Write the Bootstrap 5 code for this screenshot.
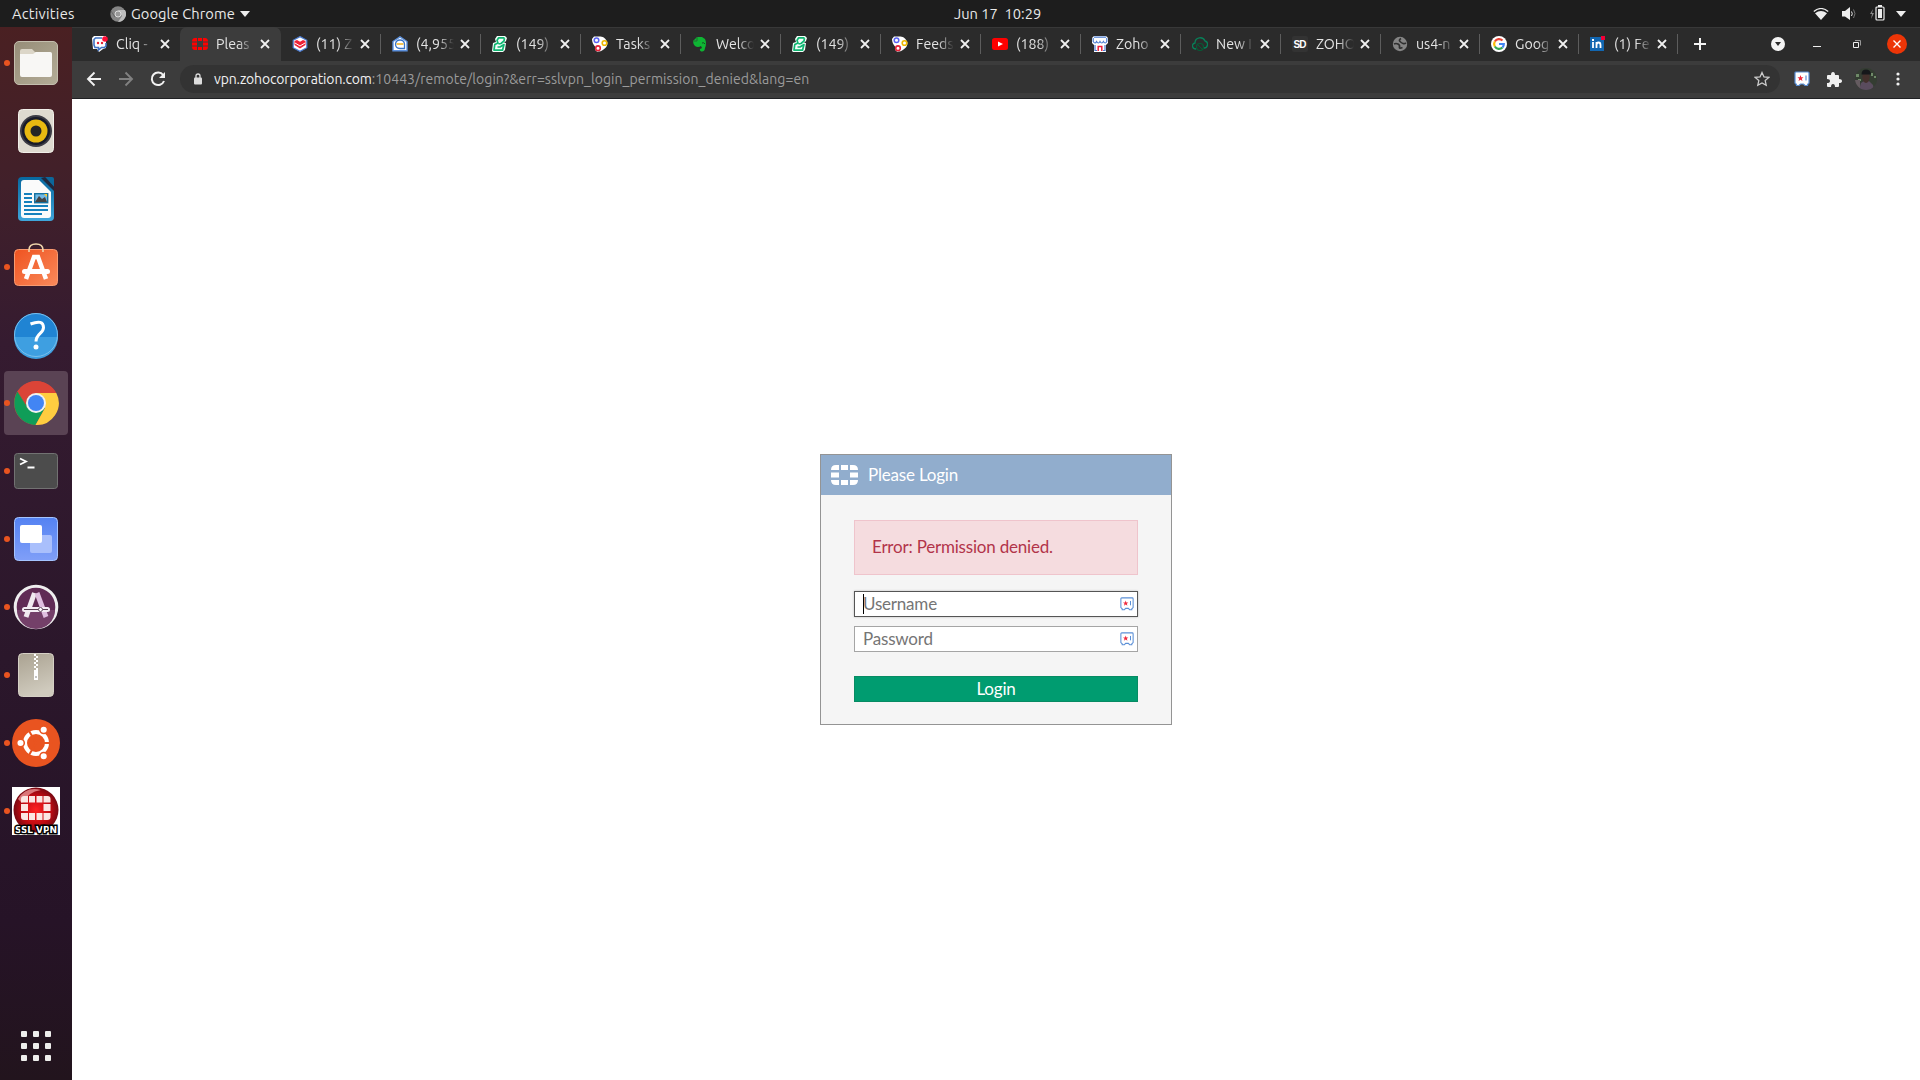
<!DOCTYPE html>
<html lang="en">
<head>
<meta charset="utf-8">
<title>Please Login</title>
<link rel="stylesheet" href="https://cdn.jsdelivr.net/npm/bootstrap@5.3.0/dist/css/bootstrap.min.css">
<script src="https://cdn.jsdelivr.net/npm/bootstrap@5.3.0/dist/js/bootstrap.bundle.min.js"></script>
<style>
body{width:1920px;height:1080px;overflow:hidden;font-family:Ubuntu,"Noto Sans",sans-serif;font-size:14px;background:#fff}
svg{display:block;flex:none}
.sysbar{height:27px;background:#1d1d1d;color:#e9e9e9;line-height:27px;font-size:14.67px}
.sys-left{width:954px;padding-left:12px}
.act{width:98px;letter-spacing:.25px}
.app-name{margin-left:5px;width:107px;letter-spacing:.08px}
.sys-right{padding-right:14px}
.dock{width:72px;height:1053px;padding:4px 4px 0;background:linear-gradient(#4a2022 0,#41202a 15%,#351b30 30%,#2b172b 60%,#261327 85%,#22141d 100%)}
.launcher{width:64px;height:64px;margin-bottom:4px;border-radius:4px;position:relative}
.launcher.focused{background:#5a4354}
.launcher.running::before{content:"";position:absolute;left:0;top:29px;width:6px;height:6px;border-radius:50%;background:#e95420}
.dock .apps{margin:0 0 19px 17px}
.tabstrip{height:34px;background:#2b2b2b;border-top:1px solid #383838;padding-left:8px}
.btab{width:100px;height:34px;margin-top:-1px;padding-left:12px;position:relative;color:#e4e4e4}
.btab.narrow{width:99px}
.btab::after{content:"";position:absolute;right:-1px;top:7px;width:1px;height:20px;background:#5d5d5d}
.btab.first::after,.btab.current::after{display:none}
.btab.current{background:#3c3c3c;border-radius:7px 7px 0 0;width:101px;margin-right:-1px}
.tab-title{width:38px;margin-left:8px;overflow:hidden;white-space:nowrap;font-size:14.200px;line-height:34px;height:34px;-webkit-mask-image:linear-gradient(90deg,#000 58%,transparent 100%);mask-image:linear-gradient(90deg,#000 58%,transparent 100%)}
.tab-x{margin-left:6px}
.narrow .tab-x{margin-left:5px}
.strip-end{margin:-1px 0 0 17px}
.toolbar{height:38px;background:#3c3c3c;border-bottom:1px solid #202124;padding:0 0 1px 14px}
.omni{width:1600px;height:28px;border-radius:14px;background:#333;color:#9b9b9b;margin-left:14px;padding:0 10px;font-size:14px;line-height:28px}
.omni b{font-weight:400;color:#f1f1f1}
.url-text{margin:-1px 0 0 12px}
.url-host{letter-spacing:-.15px}.url-path{letter-spacing:.06px}
.page-area{height:981px;padding:355px 0 0 748px;font-family:Lato,sans-serif;font-size:17px;letter-spacing:-.2px}
.login-box{width:352px;height:271px;border:1px solid #949494;background:#f5f5f5}
.login-head{height:40px;background:#91adcd;color:#fff;padding:0 0 1px 10px}
.login-head span{margin-left:10px}
.login-body{padding:25px 33px 0}
.err{height:55px;line-height:51px;border:1px solid #efc4cc;background:#f5dcdf;color:#b2344a;padding-left:17px;margin-bottom:16px}
.fieldrow{height:26px;border:1px solid #a5a5a5;background:#fff;color:#757575;padding:0 3px 0 8px;margin-bottom:9px;position:relative}
.fieldrow span{line-height:20px}
.fieldrow.active{border-color:#555;box-shadow:0 0 2px #bbb}
.fieldrow.active::before{content:"";position:absolute;left:8px;top:2px;width:1px;height:20px;background:#000}
.go{height:26px;margin-top:24px;padding:0;border-radius:0;border:1px solid #078b63;background:#009c70;color:#fff;font-size:17px;line-height:21px;padding-bottom:2px;letter-spacing:-.2px}
</style>
</head>
<body>
<svg width="0" height="0" class="position-absolute">
<defs>
<symbol id="x" viewBox="0 0 10 10"><path d="M1 1l8 8M9 1L1 9" stroke="#f0f0f0" stroke-width="1.8" fill="none"/></symbol>
<symbol id="bigin" viewBox="0 0 16 16"><path d="M5 0h8l2 2-1 3-2 2h2l-1 7-2 2H1L0 15l1-8 3-1-1-3z" fill="#f4fffa"/><path d="M12.500 1.800H6.500L5 4.500 6 7 2.800 8.500 2 14.200h8.500L12 8.500 8 11H5.500M6.500 8l2.500-.5 3-2.500.5-3" stroke="#0fb672" stroke-width="1.700" stroke-linejoin="round" fill="none"/></symbol>
<symbol id="conn" viewBox="0 0 16 16"><path d="M2 .5h5c4 0 6 1 8 5 2 4-3 9-8 10-4 1-4-3-4-5C1 8 0 6 0 3z" fill="#fff"/><circle cx="4.500" cy="4.200" r="2.300" fill="#fff" stroke="#5a63f2" stroke-width="1.500"/><circle cx="12.500" cy="7" r="2.300" fill="#fff" stroke="#f0b800" stroke-width="1.600"/><circle cx="6" cy="12.200" r="2.300" fill="#fff" stroke="#e42339" stroke-width="1.600"/></symbol>
<symbol id="vault" viewBox="0 0 16 16"><path d="M2 1h12q1 0 1 1v10l-1.500 1.500v1h-2.500l-1.500-1.500h-3L5 14.500H2.500v-1L1 12V2q0-1 1-1z" fill="#fff" stroke="#5b8fd6" stroke-width="1.200"/><path d="M6.500 4l.8 2.200h2.200L7.800 7.700l.7 2.300-2-1.300-2 1.300.7-2.300-1.700-1.500h2.200z" fill="#f0283c"/><path d="M12 4.500v5" stroke="#5b8fd6" stroke-width="1.200"/></symbol>
<symbol id="forti" viewBox="0 0 27 20"><path d="M5 0h3v5H0Q0 0 5 0zM10 0h7v5h-7zM19 0h3q5 0 5 5h-8zM0 7.500h8v5H0zM19 7.500h8v5h-8zM0 15h8v5H5q-5 0-5-5zM10 15h7v5h-7zM19 15h8q0 5-5 5h-3z"/></symbol>
<linearGradient id="gf" x2="1" y2="1"><stop stop-color="#968d78"/><stop offset="1" stop-color="#b4ac97"/></linearGradient>
<linearGradient id="go" x2="1" y2="1"><stop stop-color="#ef5320"/><stop offset="1" stop-color="#f98a5b"/></linearGradient>
<linearGradient id="gw" x2="0" y2="1"><stop stop-color="#07689f"/><stop offset="1" stop-color="#3fa6db"/></linearGradient>
<linearGradient id="gb" x2="0" y2="1"><stop stop-color="#5482f2"/><stop offset="1" stop-color="#809ff8"/></linearGradient>
<linearGradient id="gz" x2=".3" y2="1"><stop stop-color="#aaa291"/><stop offset="1" stop-color="#cfcabd"/></linearGradient>
<radialGradient id="gs"><stop stop-color="#f22"/><stop offset=".65" stop-color="#c00b12"/><stop offset="1" stop-color="#780812"/></radialGradient>
</defs></svg>

<header class="sysbar d-flex">
  <div class="sys-left d-flex align-items-center">
    <span class="act">Activities</span>
    <svg width="16" height="16" viewBox="0 0 16 16"><circle cx="8" cy="8" r="7.700" fill="#858585"/><path d="M8 4h7a8 8 0 0 1-7 12l4-6z" fill="#bdbdbd"/><path d="M1 5l4 6" stroke="#666"/><circle cx="8" cy="8" r="3" fill="#999" stroke="#ddd"/></svg>
    <span class="app-name">Google Chrome</span>
    <svg width="10" height="6" style="margin-left:2px"><path d="M0 0h10L5 6z" fill="#eee"/></svg>
  </div>
  <div class="flex-grow-1">Jun 17&nbsp; 10:29</div>
  <div class="sys-right d-flex align-items-center justify-content-end">
    <svg width="16" height="12" viewBox="0 0 16 12"><path d="M.8 3.500Q8-2.500 15.200 3.500" stroke="#eee" stroke-width="1.2" fill="none"/><path d="M2 5.200q6-4.500 12 0L8 12z" fill="#eee"/></svg>
    <svg style="margin-left:13px" width="15" height="14" viewBox="0 0 15 14"><path d="M0 4h3l5-4v13L3 9.500H0z" fill="#eee"/><path d="M9.500 4.500q1.500 2.200 0 4.500" stroke="#eee" fill="none"/><path d="M11.500 2.500q3 4 0 8.500" stroke="#777" fill="none"/></svg>
    <svg style="margin-left:12px;margin-top:-2px" width="16" height="16" viewBox="0 0 16 16"><path d="M4 4L1 9h2l-1 5 3-6H3z" fill="#888"/><rect x="7" y="2" width="8" height="13" rx="1" fill="none" stroke="#eee" stroke-width="1.2"/><path d="M9 0h4v2H9zM9 4h4v9H9z" fill="#eee"/></svg>
    <svg style="margin-left:11px" width="10" height="6"><path d="M0 0h10L5 6z" fill="#eee"/></svg>
  </div>
</header>

<div class="d-flex">
<aside class="dock d-flex flex-column flex-shrink-0">
  <div class="launcher running p-2"><svg width="48" height="48" viewBox="0 0 48 48"><rect x="2.500" y="2.500" width="43" height="43" rx="4.500" fill="url(#gf)" stroke="#c4beae"/><path d="M8 16v-4q0-2 2-2h10l3 3h14q3 0 3 3z" fill="#dcd6c8"/><path d="M8 15h13l3-2h14q2 0 2 2v21q0 2-2 2H10q-2 0-2-2z" fill="#f8f7f5"/></svg></div>
  <div class="launcher p-2"><svg width="48" height="48" viewBox="0 0 48 48"><rect x="6.500" y="2.500" width="35" height="43" rx="4" fill="#dedad0" stroke="#f1efe9"/><circle cx="24" cy="24" r="16" fill="#3c3c45"/><circle cx="24" cy="24" r="14" fill="#181b29"/><circle cx="24" cy="24" r="11.500" fill="#e8b911"/><circle cx="24" cy="24" r="5.500" fill="#252525"/></svg></div>
  <div class="launcher p-2"><svg width="48" height="48" viewBox="0 0 48 48"><path d="M10 2h23l9 12v28q0 4-4 4H10q-4 0-4-4V6q0-4 4-4z" fill="url(#gw)"/><path d="M33 2h7q2 0 2 2v8z" fill="#0c679b"/><path d="M29 3l13 13v-4L33 2z" fill="#20283e"/><path d="M12 5h15l12 12v23q0 3-3 3H12q-3 0-3-3V8q0-3 3-3z" fill="#fbfbfb"/><path d="M12 19h8M12 23h8M12 27h8M12 31h24M12 35h24M12 39h18" stroke="#1681bd" stroke-width="2"/><rect x="22.700" y="18.700" width="13" height="9" fill="#70b9e6" stroke="#15719f" stroke-width="1.400"/><path d="M23 27l4-6 3 3 3-2 2 5z" fill="#444"/><path d="M32 19h3v3z" fill="#ffc928"/></svg></div>
  <div class="launcher running p-2"><svg width="48" height="48" viewBox="0 0 48 48"><rect x="2.500" y="6.500" width="43" height="36" rx="4" fill="url(#go)" stroke="#f89a70"/><path d="M17 9V7q0-6 7-6t7 6v2" stroke="#f1d6ac" stroke-width="1.600" fill="none"/><path d="M14 36l8-22h4l8 22" fill="none" stroke="#fff" stroke-width="4.500"/><rect x="10" y="26" width="28" height="5" rx="2.500" fill="#fff"/></svg></div>
  <div class="launcher p-2"><svg width="48" height="48" viewBox="0 0 48 48"><circle cx="24" cy="24" r="22" fill="#2084d3"/><path d="M2 26h44a22 22 0 0 1-44 0z" fill="#3e9fe1"/><circle cx="24" cy="24" r="21.500" fill="none" stroke="#79bfec"/><path d="M18.500 13q13-5 13 3.500c0 6-7.500 6-7.500 14" fill="none" stroke="#fff" stroke-width="3"/><circle cx="24" cy="36" r="2.500" fill="#fff"/></svg></div>
  <div class="launcher running focused p-2"><svg width="48" height="48" viewBox="0 0 48 48"><circle cx="24" cy="24" r="22" fill="#db4437"/><path d="M5.500 12.500A22 22 0 0 0 23.500 46L33 29 24 24 15 29z" fill="#0f9d58"/><path d="M44.300 14A22 22 0 0 1 23.500 46L33 29 24 14z" fill="#ffcd40"/><path d="M5.500 12.500L15 29l9-5z" fill="#0f9d58"/><path d="M5.500 12.500Q13 2 24 2c9 0 17 5 20.300 12H24q-9 0-10 12z" fill="#db4437"/><circle cx="24" cy="24" r="10" fill="#f1f1f1"/><circle cx="24" cy="24" r="8" fill="#4285f4"/></svg></div>
  <div class="launcher running p-2"><svg width="48" height="48" viewBox="0 0 48 48"><rect x="2.500" y="6.500" width="43" height="35" rx="3" fill="#4c4c4c" stroke="#727272"/><path d="M8 11.500l6 3-6 3M15.500 20.500h7" fill="none" stroke="#fff" stroke-width="1.800"/></svg></div>
  <div class="launcher running p-2"><svg width="48" height="48" viewBox="0 0 48 48"><rect x="2.500" y="2.500" width="43" height="43" rx="4" fill="url(#gb)" stroke="#a5c4ff"/><rect x="18" y="20" width="22" height="18" rx="2" fill="#a9bffc"/><rect x="8" y="10" width="22" height="18" rx="2" fill="#fff"/></svg></div>
  <div class="launcher running p-2"><svg width="48" height="48" viewBox="0 0 48 48"><circle cx="24" cy="24" r="20.800" fill="#602b55" stroke="#eee" stroke-width="3"/><path d="M5 27h38a19 19 0 0 1-38 0z" fill="#744069"/><path d="M14 34l8.500-24" fill="none" stroke="#f0eaf0" stroke-width="5"/><path d="M25 10l9 24" stroke="#dfbfdf" stroke-width="5"/><rect x="10" y="24" width="28" height="5" rx="2.500" fill="#f4eef4"/><path d="M12 26.500h24" stroke="#584052"/><circle cx="28.500" cy="26.500" r="2" fill="#fff" stroke="#685063"/></svg></div>
  <div class="launcher running p-2"><svg width="48" height="48" viewBox="0 0 48 48"><rect x="6.500" y="2.500" width="35" height="43" rx="4" fill="url(#gz)" stroke="#d5d0c5"/><path d="M22 3h2v2h-2zM24 5h2v2h-2zM22 7h2v2h-2zM24 9h2v2h-2zM22 11h2v2h-2zM24 13h2v2h-2zM22 15h2v2h-2zM24 17h2v2h-2zM22 19h4v10h-4z" fill="#fff"/><path d="M24 25v2" stroke="#888"/></svg></div>
  <div class="launcher running p-2"><svg width="48" height="48" viewBox="0 0 48 48"><circle cx="24" cy="24" r="24" fill="#e95420"/><circle cx="24" cy="24" r="11" fill="none" stroke="#fff" stroke-width="4"/><path d="M24 24L9 24M24 24l8-14M24 24l8 14" stroke="#e95420" stroke-width="2" transform="rotate(60 24 24)"/><g fill="#fff" stroke="#e95420" stroke-width="1.500"><circle cx="8.500" cy="24" r="3.800"/><circle cx="31.700" cy="10.700" r="3.800"/><circle cx="31.700" cy="37.300" r="3.800"/></g></svg></div>
  <div class="launcher running p-2"><svg width="48" height="48" viewBox="0 0 48 48"><path d="M0 0h48v48H0z" fill="#fff"/><circle cx="24" cy="23" r="22.500" fill="url(#gs)"/><path d="M6 12Q14-1 29 3 16 5 10 16z" fill="#f8a5a5" opacity=".7"/><path d="M12 9h4v6.500H9V12q0-3 3-3zM17 9h6v6.500h-6zM24.500 9h6v6.500h-6zM31.500 9h4q3 0 3 3v3.500h-7zM9 17h7v7H9zM31.500 17h7v7h-7zM9 26h7v7h-4q-3 0-3-3zM17 26h6v7h-6zM24.500 26h6v7h-6zM31.500 26h7v4q0 3-3 3h-4z" fill="#fbe6e3"/><text x="24" y="46" text-anchor="middle" textLength="42" font-family="DejaVu Sans" font-weight="bold" font-size="9" fill="#fff" stroke="#000" stroke-width="3" paint-order="stroke">SSL VPN</text></svg></div>
  <svg class="apps mt-auto" width="30" height="30" viewBox="0 0 30 30" fill="#eeeeec"><g id="dots"><rect width="6" height="6" rx="1"/><rect x="12" width="6" height="6" rx="1"/><rect x="24" width="6" height="6" rx="1"/></g><use href="#dots" y="12"/><use href="#dots" y="24"/></svg>
</aside>

<main style="width:1848px">
  <div class="tabstrip d-flex">
    <div class="btab first d-flex align-items-center"><svg width="16" height="16" viewBox="0 0 16 16"><path d="M0 2l2-2h12v12l-3 1-4 3-2-3H1z" fill="#fff"/><path d="M10 2H3.500L2 3.500V9l1 2.500h3.500V14l3-2.500h3L14 10V7" fill="none" stroke="#3f72c4" stroke-width="1.600"/><circle cx="6" cy="7" r="1.200" fill="#e42032"/><circle cx="10" cy="7" r="1.200" fill="#e42032"/><circle cx="13" cy="3" r="2.800" fill="#ff0b35"/></svg><span class="tab-title">Cliq -</span><svg class="tab-x" width="10" height="10"><use href="#x"/></svg></div>
    <div class="btab current d-flex align-items-center"><svg width="16" height="12" viewBox="0 0 16 12" fill="#f00"><path d="M3 0h2v3.500H0Q0 0 3 0zM6 0h4v3H6zM11 0h2q3 0 3 3.500h-5zM0 4.500h5v3H0zM11 4.500h5v3h-5zM0 8.500h5V12H3Q0 12 0 8.500zM6 9h4v3H6zM11 8.500h5Q16 12 13 12h-2z"/></svg><span class="tab-title">Pleas</span><svg class="tab-x" width="10" height="10"><use href="#x"/></svg></div>
    <div class="btab d-flex align-items-center"><svg width="16" height="16" viewBox="0 0 16 16"><path d="M8 .6l6.800 3.700v7.400L8 15.400l-6.800-3.700V4.300z" fill="#fff" stroke="#4a7bd0" stroke-width="1.200"/><path d="M2.500 5L5 4l3 1.800L11 4l2.500 1v4L8 12.500 2.500 9z" fill="#ee2238"/><path d="M3 7l5 3 5-3" stroke="#fff" fill="none"/></svg><span class="tab-title">(11) Z</span><svg class="tab-x" width="10" height="10"><use href="#x"/></svg></div>
    <div class="btab d-flex align-items-center"><svg width="16" height="16" viewBox="0 0 16 16"><path d="M1 5.500L8 .8l7 4.700v9.300H1z" fill="#fff" stroke="#5c90dc" stroke-width="1.400"/><path d="M3.500 8Q4 4 8 4t4.500 4M3.500 8q0 4.500 4.500 4.500h4.500V8" fill="none" stroke="#3974c8" stroke-width="1.300"/><path d="M4.500 8h7" stroke="#efb01c" stroke-width="1.500"/></svg><span class="tab-title">(4,955</span><svg class="tab-x" width="10" height="10"><use href="#x"/></svg></div>
    <div class="btab d-flex align-items-center"><svg width="16" height="16"><use href="#bigin"/></svg><span class="tab-title">(149)</span><svg class="tab-x" width="10" height="10"><use href="#x"/></svg></div>
    <div class="btab d-flex align-items-center"><svg width="16" height="16"><use href="#conn"/></svg><span class="tab-title">Tasks</span><svg class="tab-x" width="10" height="10"><use href="#x"/></svg></div>
    <div class="btab d-flex align-items-center"><svg width="16" height="16" viewBox="0 0 16 16"><path d="M1 5l4-4h5l3 2q2 4 0 9c0 5-6 4-5 1l2-1-1-2q-3 2-6 0-2-2-2-5z" fill="#0eb533"/><path d="M5 1v4H1" stroke="#216c32" fill="none"/><path d="M10 7q2-1 3 1" stroke="#174923" fill="none"/></svg><span class="tab-title">Welc<span>o</span></span><svg class="tab-x" width="10" height="10"><use href="#x"/></svg></div>
    <div class="btab d-flex align-items-center"><svg width="16" height="16"><use href="#bigin"/></svg><span class="tab-title">(149)</span><svg class="tab-x" width="10" height="10"><use href="#x"/></svg></div>
    <div class="btab d-flex align-items-center"><svg width="16" height="16"><use href="#conn"/></svg><span class="tab-title">Feeds</span><svg class="tab-x" width="10" height="10"><use href="#x"/></svg></div>
    <div class="btab d-flex align-items-center"><svg width="16" height="12" viewBox="0 0 16 12"><rect width="16" height="12" rx="2.500" fill="#f00"/><path d="M6 3.500L11 6 6 8.500z" fill="#fff"/></svg><span class="tab-title">(188)</span><svg class="tab-x" width="10" height="10"><use href="#x"/></svg></div>
    <div class="btab d-flex align-items-center"><svg width="16" height="16" viewBox="0 0 16 16"><path d="M2 0h12l2 2v5l-2 2v7H2V9L0 7V2z" fill="#fff"/><path d="M2 1.200h12M1.200 2v3.500q2 3 3.400 0 1.800 3 3.400 0 1.800 3 3.400 0 1.800 3 3.400 0V2M3 9v5.500h2M13 9v5.500h-2" fill="none" stroke="#4a7bd0" stroke-width="1.200"/><path d="M6.200 15v-4.500h3.600V15" fill="none" stroke="#ed2039" stroke-width="1.500"/></svg><span class="tab-title">Zoho</span><svg class="tab-x" width="10" height="10"><use href="#x"/></svg></div>
    <div class="btab d-flex align-items-center"><svg width="16" height="16" viewBox="0 0 16 16"><path d="M4 13C0 13-1 8 3 7c0-6 8-7 10-2 4 1 3 7-1 7" fill="none" stroke="#087f58" stroke-width="1.300"/><circle cx="8" cy="11" r="3.500" fill="none" stroke="#065b36" stroke-width="1.200"/><path d="M5 8l6 6" stroke="#065b36"/></svg><span class="tab-title">New I</span><svg class="tab-x" width="10" height="10"><use href="#x"/></svg></div>
    <div class="btab d-flex align-items-center"><svg width="16" height="16"><rect width="16" height="16" rx="2" fill="#333"/><text x="1.500" y="11.500" textLength="13" font-family="Liberation Sans" font-weight="bold" font-size="10" fill="#fff">SD</text></svg><span class="tab-title">ZOHO</span><svg class="tab-x" width="10" height="10"><use href="#x"/></svg></div>
    <div class="btab narrow d-flex align-items-center"><svg width="16" height="16" viewBox="0 0 16 16"><circle cx="8" cy="8" r="7.200" fill="#858585"/><path d="M2 8q2-1 4 0t1.500 3 3 .5M9 2.500Q6.500 4 8 5.500t3 2 3-.5" stroke="#303030" stroke-width="1.700" fill="none"/></svg><span class="tab-title">us4-n</span><svg class="tab-x" width="10" height="10"><use href="#x"/></svg></div>
    <div class="btab narrow d-flex align-items-center"><svg width="16" height="16" viewBox="0 0 16 16"><circle cx="8" cy="8" r="8" fill="#fff"/><g fill="none" stroke-width="2.200"><path d="M3.800 5.500A5 5 0 0 1 11.500 4.500" stroke="#ea4335"/><path d="M3.800 5.500a5 5 0 0 0 0 5" stroke="#fbbc05"/><path d="M3.800 10.500a5 5 0 0 0 7.700 1" stroke="#34a853"/><path d="M11.500 11.500q1.300-1.200 1.300-3.500H8" stroke="#4285f4"/></g></svg><span class="tab-title">Goog</span><svg class="tab-x" width="10" height="10"><use href="#x"/></svg></div>
    <div class="btab narrow d-flex align-items-center"><svg width="16" height="16" viewBox="0 0 16 16"><rect y="1" width="14" height="14" fill="#1266b0"/><path d="M3 6v6M6.500 12V6M6.500 9q0-2.500 2-2.500T10.500 9v3" stroke="#fff" stroke-width="1.800" fill="none"/><path d="M2 3h2v2H2z" fill="#fff"/><path d="M11 0h4v4h-4z" fill="#f40036"/></svg><span class="tab-title">(1) Fe</span><svg class="tab-x" width="10" height="10"><use href="#x"/></svg></div>
    <div class="strip-end d-flex align-items-center">
      <svg width="12" height="12"><path d="M6 0v12M0 6h12" stroke="#f4f4f4" stroke-width="2"/></svg>
      <svg style="margin-left:65px" width="14" height="14" viewBox="0 0 14 14"><circle cx="7" cy="7" r="7" fill="#f4f4f4"/><path d="M4 5h6L7 9z" fill="#2b2b2b"/></svg>
      <svg style="margin-left:28px" width="8" height="6"><path d="M0 5h8v1H0z" fill="#eee"/></svg>
      <svg style="margin-left:32px" width="8" height="8"><path d="M.5 2.500h5v5h-5z" fill="none" stroke="#eee"/><path d="M2 .5h5.500v5" fill="none" stroke="#999"/></svg>
      <svg style="margin-left:26px" width="20" height="20" viewBox="0 0 20 20"><circle cx="10" cy="10" r="10" fill="#ed3507"/><path d="M6.500 6.500l7 7M13.500 6.500l-7 7" stroke="#fff" stroke-width="1.400"/></svg>
    </div>
  </div>
  <div class="toolbar d-flex align-items-center">
    <svg width="16" height="16" viewBox="0 0 16 16"><path d="M15 8H2M8.500 1.500L2 8l6.500 6.500" fill="none" stroke="#f1f1f1" stroke-width="1.900"/></svg>
    <svg class="ms-3" width="16" height="16" viewBox="0 0 16 16"><path d="M1 8h13M7.500 1.500L14 8l-6.500 6.500" fill="none" stroke="#818181" stroke-width="1.900"/></svg>
    <svg class="ms-3" width="16" height="16" viewBox="0 0 16 16"><path d="M13.200 4A6.300 6.300 0 1 0 14 10" fill="none" stroke="#f1f1f1" stroke-width="2"/><path d="M15 1v6H9z" fill="#f1f1f1"/></svg>
    <div class="omni d-flex align-items-center">
      <svg class="ms-1" width="8" height="12" viewBox="0 0 8 12"><path d="M2 5V3q0-2 2-2t2 2v2" fill="none" stroke="#ddd" stroke-width="1.300"/><rect y="4.500" width="8" height="7" rx="1" fill="#ddd"/></svg>
      <span class="url-text"><b class="url-host">vpn.zohocorporation.com</b><span class="url-path">:10443/remote/login?&amp;err=sslvpn_login_permission_denied&amp;lang=en</span></span>
      <svg class="ms-auto" width="16" height="16" viewBox="0 0 16 16"><path d="M8 1.500l2 4.400 4.800.5-3.600 3.200 1 4.700L8 11.900l-4.200 2.400 1-4.700-3.600-3.200 4.800-.5z" fill="none" stroke="#ccc" stroke-width="1.300"/></svg>
    </div>
    <svg style="margin-left:14px" width="16" height="16"><use href="#vault"/></svg>
    <svg class="ms-3" width="16" height="16" viewBox="0 0 16 16"><path d="M2 4h3q0-3 2-3t2 3h3q1 0 1 1v3q3 0 3 2t-3 2v3q0 1-1 1H9q0-3-2-3t-2 3H2q-1 0-1-1v-3q3 0 3-2T1 8V5q0-1 1-1z" fill="#f1f1f1"/></svg>
    <svg style="margin-left:13px" width="22" height="22" viewBox="0 0 22 22"><clipPath id="av"><circle cx="11" cy="11" r="11"/></clipPath><g clip-path="url(#av)"><path d="M0 0h22v22H0z" fill="#343d32"/><path d="M1 6h3v3H1zM16 5h2v3h-2zM19 8h2v2h-2zM3 11h3v2H3z" fill="#6f8a68"/><path d="M0 12h5v10H0z" fill="#655b60"/><path d="M4 22l2-7 3-2h5l4 4 1 5z" fill="#5a4c5e"/><ellipse cx="11" cy="9" rx="3.600" ry="6" fill="#43302c"/><path d="M6.500 6.500q0-5 4.500-5t5 5z" fill="#15171a"/></g></svg>
    <svg style="margin-left:19px" width="4" height="14" fill="#f1f1f1"><circle cx="2" cy="2" r="1.600"/><circle cx="2" cy="7" r="1.600"/><circle cx="2" cy="12" r="1.600"/></svg>
  </div>

  <div class="page-area">
    <form class="login-box">
      <div class="login-head d-flex align-items-center"><svg width="27" height="20" fill="#fff"><use href="#forti" width="27" height="20"/></svg><span>Please Login</span></div>
      <div class="login-body">
        <div class="err">Error: Permission denied.</div>
        <div class="fieldrow active d-flex align-items-center justify-content-between"><span>Username</span><svg width="14" height="14"><use href="#vault"/></svg></div>
        <div class="fieldrow d-flex align-items-center justify-content-between"><span>Password</span><svg width="14" height="14"><use href="#vault"/></svg></div>
        <button type="button" class="go btn w-100 d-block">Login</button>
      </div>
    </form>
  </div>
</main>
</div>
</body>
</html>
